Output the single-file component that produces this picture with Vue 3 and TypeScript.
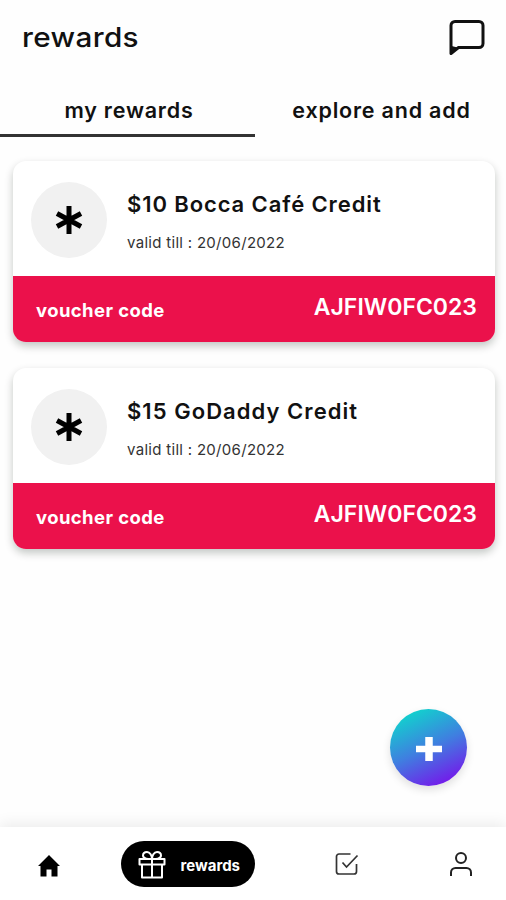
<script setup lang="ts">
interface Reward {
  id: number
  title: string
  kind: string
  validTill: string
  code: string
}

const rewards: Reward[] = [
  { id: 1, title: '$10 Bocca Café Credit', kind: 'cafe', validTill: '20/06/2022', code: 'AJFIW0FC023' },
  { id: 2, title: '$15 GoDaddy Credit', kind: 'domain', validTill: '20/06/2022', code: 'AJFIW0FC023' },
]
</script>

<template>
  <div class="screen">
    <header class="header">
      <h1 class="heading">rewards</h1>
      <svg class="chat" viewBox="0 0 36 36" fill="none" stroke="#111" stroke-width="3" stroke-linejoin="round">
        <path d="M2 33.500V5.500a4 4 0 0 1 4-4h24a4 4 0 0 1 4 4v18a4 4 0 0 1-4 4H9.500z" />
        <path d="M2.500 26v7l6-5.500z" fill="#111" stroke="none" />
      </svg>
    </header>

    <nav class="tabs">
      <a class="tab active"><span class="tab-mine">my rewards</span></a>
      <a class="tab"><span class="tab-explore">explore and add</span></a>
    </nav>

    <main class="list">
      <article v-for="reward in rewards" :key="reward.id" class="card">
        <div class="info">
          <div class="badge">
            <svg width="28" height="30" viewBox="0 0 28 30" stroke="#000" stroke-width="5">
              <path d="M14 1v28M2 8.500l24 13M26 8.500L2 21.500" />
            </svg>
          </div>
          <div class="details">
            <h2 class="title" :class="reward.kind">{{ reward.title }}</h2>
            <p class="valid">valid till : {{ reward.validTill }}</p>
          </div>
        </div>
        <div class="voucher">
          <span class="label">voucher code</span>
          <span class="code">{{ reward.code }}</span>
        </div>
      </article>
    </main>

    <button class="fab" aria-label="add">
      <svg width="26" height="24" viewBox="0 0 26 24" stroke="#fff">
        <path d="M13 0v24" stroke-width="7.500" />
        <path d="M0 12h26" stroke-width="6.500" />
      </svg>
    </button>

    <footer class="bottom">
      <svg class="home" width="22" height="22" viewBox="0 0 22 22">
        <path d="M11 0L0 11h2.500v10.500h6v-7h5v7h6V11H22z" />
      </svg>
      <a class="pill">
        <svg width="28" height="28" viewBox="0 0 28 28" fill="none" stroke="#fff" stroke-width="2" stroke-linejoin="round">
          <rect x="1.500" y="8" width="25" height="5.500" />
          <path d="M4 13.500V26.500h20V13.500M14 8v18.500" />
          <path d="M14 8C12 8 5 8.500 5 4.500C5 2 7 1 9 1c3 0 5 3.500 5 7M14 8c2 0 9 .5 9-3.500C23 2 21 1 19 1c-3 0-5 3.500-5 7" />
        </svg>
        <span class="pill-text">rewards</span>
      </a>
      <svg class="check" width="24" height="24" viewBox="0 0 24 24" fill="none" stroke="#333" stroke-width="1.700">
        <path d="M15.500 2H4a2.500 2.500 0 0 0-2.500 2.500v15A2.500 2.500 0 0 0 4 22h15a2.500 2.500 0 0 0 2.500-2.500V12" />
        <path d="M7.500 10.500l4 4.500L22.500 3.500" />
      </svg>
      <svg class="user" width="22" height="24" viewBox="0 0 22 24" fill="none" stroke="#222" stroke-width="2">
        <circle cx="11" cy="6" r="5" />
        <path d="M1 24v-3.500a4.500 4.500 0 0 1 4.500-4.500h11a4.500 4.500 0 0 1 4.500 4.500V24" />
      </svg>
    </footer>
  </div>
</template>

<style>
body {
  margin: 0;
  background: #fefefe;
}
</style>

<style scoped>
.screen {
  position: relative;
  box-sizing: border-box;
  width: 506px;
  height: 900px;
  overflow: hidden;
  display: flex;
  flex-direction: column;
  background: #fefefe;
  color: #111;
  font-family: Inter, "Liberation Sans", sans-serif;
  white-space: nowrap;
}
h1, h2, p {
  margin: 0;
}
.header {
  height: 84px;
  box-sizing: border-box;
  padding: 20px 21px 0 22px;
  display: flex;
  justify-content: space-between;
  align-items: flex-start;
}
.heading {
  padding-top: 1px;
  font-size: 27px;
  line-height: 34px;
  font-weight: 450;
  transform: scaleX(1.1);
  transform-origin: left;
  letter-spacing: 0.3px;
}
.chat {
  width: 36px;
  height: 36px;
}
.tabs {
  height: 53px;
  display: grid;
  grid-template-columns: 255px 251px;
}
.tab {
  box-sizing: border-box;
  height: 53px;
  padding-top: 12px;
  text-align: center;
  font-size: 21.5px;
  line-height: 28px;
  font-weight: 600;
}
.active {
  border-bottom: 3px solid #333;
}
.tab-mine {
  margin-left: 3px;
  letter-spacing: 0.8px;
}
.tab-explore {
  margin-left: 2px;
  letter-spacing: 0.8px;
}
.list {
  padding: 24px 11px 0 13px;
  display: flex;
  flex-direction: column;
  gap: 26px;
}
.card {
  height: 181px;
  border-radius: 13px;
  background: #fff;
  overflow: hidden;
  box-shadow: 0 4px 8px rgba(0, 20, 10, 0.24);
}
.info {
  height: 115px;
  display: flex;
}
.badge {
  width: 76px;
  height: 76px;
  margin: 21px 20px 0 18px;
  border-radius: 50%;
  background: #f1f1f1;
  display: flex;
  align-items: center;
  justify-content: center;
}
.details {
  padding-top: 28px;
}
.title {
  font-size: 22px;
  line-height: 30px;
  font-weight: 600;
  letter-spacing: 0.9px;
}
.domain {
  letter-spacing: 1.05px;
}
.valid {
  margin-top: 14px;
  font-size: 15px;
  line-height: 20px;
  letter-spacing: 0.3px;
  color: #333;
}
.voucher {
  height: 66px;
  box-sizing: border-box;
  padding: 0 18px 0 23px;
  display: flex;
  justify-content: space-between;
  align-items: center;
  background: #eb114b;
  color: #fff;
}
.label {
  padding-top: 2px;
  font-size: 18.5px;
  font-weight: 700;
  letter-spacing: 0.4px;
}
.code {
  padding-bottom: 4px;
  font-size: 23px;
  font-weight: 600;
}
.fab {
  position: absolute;
  left: 390px;
  top: 709px;
  width: 77px;
  height: 77px;
  padding: 2px 0 0 1px;
  border: 0;
  border-radius: 50%;
  display: flex;
  align-items: center;
  justify-content: center;
  background: linear-gradient(155deg, #08e2ca 3%, #3f7fe0 50%, #7d08ec 96%);
  box-shadow: 0 4px 8px rgba(0, 0, 0, 0.12);
}
.bottom {
  height: 73px;
  margin-top: auto;
  box-sizing: border-box;
  padding: 14px 34px 0 38px;
  display: flex;
  align-items: flex-start;
  background: #fff;
  box-shadow: 0 -3px 14px rgba(0, 0, 0, 0.08);
}
.home {
  margin-top: 14px;
}
.pill {
  margin-left: 61px;
  width: 134px;
  height: 46px;
  box-sizing: border-box;
  padding: 1px 15px 0 17px;
  border-radius: 23px;
  display: flex;
  align-items: center;
  justify-content: space-between;
  background: #000;
  color: #fff;
}
.pill-text {
  padding-top: 1px;
  font-size: 15px;
  font-weight: 700;
}
.check {
  margin: 11px 0 0 80px;
}
.user {
  margin: 11px 0 0 auto;
}
</style>
